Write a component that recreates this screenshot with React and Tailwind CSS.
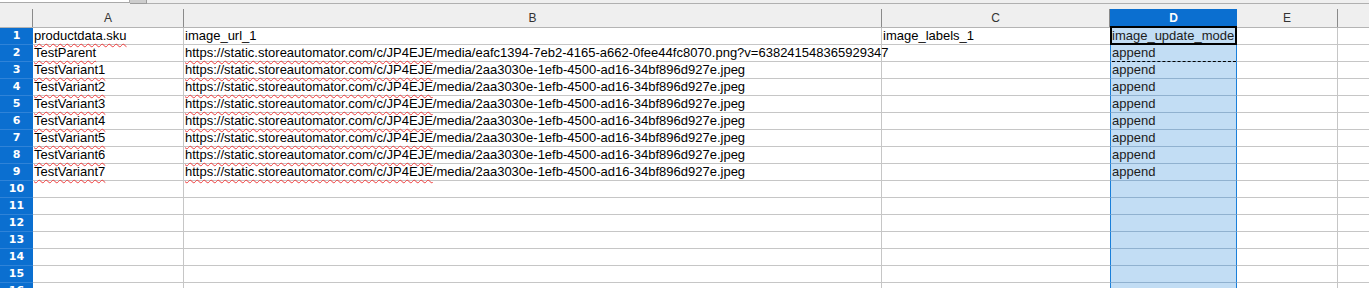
const cols = [
  { key: 'A', w: 'w-[151px]', line: 'border-r border-[#c6c6c6]' },
  { key: 'B', w: 'w-[698px]', line: 'border-r border-[#c6c6c6]' },
  { key: 'C', w: 'w-[228px]', line: '' },
  { key: 'D', w: 'w-[127px]', line: 'border-x border-[#1a7fd9]' },
  { key: 'E', w: 'w-[101px]', line: 'border-r border-[#c6c6c6]' },
  { key: 'F', w: 'flex-1', line: '' },
];

const url1 = 'https://static.storeautomator.com/c/JP4EJE/media/eafc1394-7eb2-4165-a662-0fee44fc8070.png?v=638241548365929347';
const urlRest = '/media/2aa3030e-1efb-4500-ad16-34bf896d927e.jpeg';

const rows = [
  { a: 'productdata.sku', b: 'image_url_1', c: 'image_labels_1', d: 'image_update_mode', plainB: true },
  { a: 'TestParent', b: url1, d: 'append' },
  ...[1, 2, 3, 4, 5, 6, 7].map((n) => ({ a: `TestVariant${n}`, b: 'https://static.storeautomator.com/c/JP4EJE' + urlRest, d: 'append' })),
];

const wavy = 'underline decoration-wavy decoration-[#f03c3c] decoration-1 underline-offset-[3px]';

function UrlText({ text, plain }) {
  if (plain) return <span>{text}</span>;
  const head = 'https://static.storeautomator.com/c/JP4EJE';
  return (
    <>
      <span className={wavy}>{head}</span>
      <span>{text.slice(head.length)}</span>
    </>
  );
}

function HeaderRow() {
  return (
    <div className="flex h-[19px] border-b border-[#b4b4b4] bg-[#efefef]">
      <div className="w-[33px] shrink-0 border-r border-[#8a8a8a]" />
      {cols.map((c) =>
        c.key === 'D' ? (
          <div
            key={c.key}
            className={`${c.w} shrink-0 bg-[#0b6fd0] text-white font-bold text-[12px] flex items-center justify-center`}
          >
            D
          </div>
        ) : (
          <div
            key={c.key}
            className={`${c.w} shrink-0 text-[12px] text-[#333] flex items-center justify-center ${
              c.key === 'F' ? '' : 'border-r border-[#8a8a8a]'
            }`}
          >
            {c.key === 'F' ? '' : c.key}
          </div>
        )
      )}
    </div>
  );
}

function DataRow({ num, row }) {
  const cell = 'h-[17px] shrink-0 border-b whitespace-nowrap pl-[1px] leading-[16px] overflow-visible';
  return (
    <div className="flex">
      <div className="w-[33px] h-[17px] shrink-0 bg-[#0b6fd0] border-b border-[#2f83d8] text-white font-bold text-[11px] leading-[16px] flex items-center justify-center font-['DejaVu_Sans',sans-serif]">
        {num}
      </div>
      <div className={`${cols[0].w} ${cols[0].line} ${cell} border-b-[#c6c6c6]`}>
        {row && <span className={wavy}>{row.a}</span>}
      </div>
      <div className={`${cols[1].w} ${cols[1].line} ${cell} border-b-[#c6c6c6]`}>
        {row && <UrlText text={row.b} plain={row.plainB} />}
      </div>
      <div className={`${cols[2].w} ${cell} border-b-[#c6c6c6]`}>{row && row.c}</div>
      <div className={`${cols[3].w} ${cols[3].line} ${cell} border-b-[#90b1cf] bg-[#c2ddf4] text-[#1c1c1c] relative`}>
        {row && row.d}
        {num === 1 && <div className="absolute -left-px -top-[2px] -right-px -bottom-px border-2 border-black pointer-events-none" />}
        {num === 2 && <div className="absolute left-[1px] right-0 -bottom-px border-b border-dashed border-black pointer-events-none" />}
      </div>
      <div className={`${cols[4].w} ${cols[4].line} ${cell} border-b-[#c6c6c6]`} />
      <div className={`flex-1 ${cell} border-b-[#c6c6c6]`} />
    </div>
  );
}

export default function App() {
  const nums = Array.from({ length: 16 }, (_, i) => i + 1);
  return (
    <div className="w-[1369px] h-[288px] overflow-hidden bg-white font-['Liberation_Sans',Arial,sans-serif] text-[13px] text-black">
      <div className="h-[9px] flex items-start bg-[#efefef]">
        <div className="w-[130px] h-[3px] bg-white border-b border-r border-[#a9a9a9]" />
        <div className="w-[17px] h-[4px] bg-[#cdcdcd] border-b border-r border-[#9d9d9d]" />
        <div className="flex-1 h-[4px] border-b border-[#b0b0b0]" />
      </div>
      <HeaderRow />
      {nums.map((n) => (
        <DataRow key={n} num={n} row={rows[n - 1]} />
      ))}
    </div>
  );
}
